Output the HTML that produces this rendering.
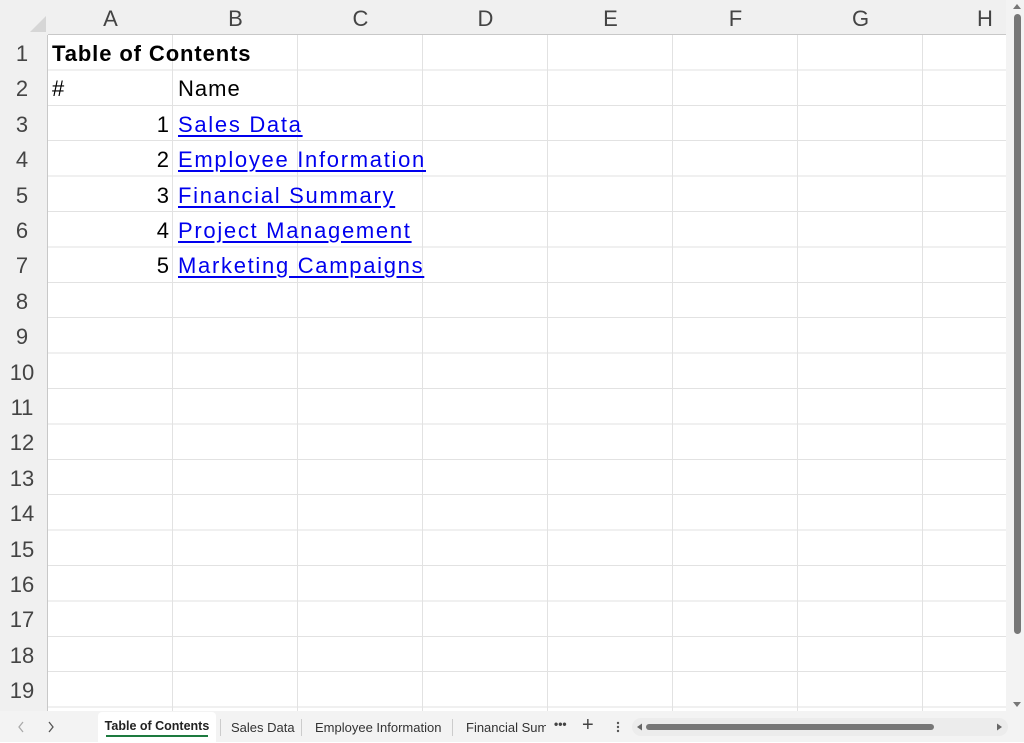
<!DOCTYPE html>
<html><head><meta charset="utf-8"><style>
*{margin:0;padding:0;box-sizing:border-box}
body{width:1024px;height:742px;overflow:hidden;background:#fff;font-family:"Liberation Sans",Carlito,sans-serif;position:relative}
.a{position:absolute}
#colh{left:0;top:0;width:1006px;height:35px;background:#f0f0f0;border-bottom:1px solid #c8c8c8}
#rowh{left:0;top:35px;width:48px;height:676px;background:#f0f0f0;border-right:1px solid #c8c8c8}
#grid{left:48px;top:35px;width:958px;height:676px;
background-image:repeating-linear-gradient(to right,transparent 0,transparent 124px,#e2e2e2 124px,#e2e2e2 125px),repeating-linear-gradient(to bottom,transparent 0,transparent 34.4px,#e2e2e2 34.4px,#e2e2e2 35.4px)}
.ch{top:0;height:35px;line-height:37px;width:125px;text-align:center;font-size:22px;color:#444}
.rh{left:0;width:44px;text-align:center;font-size:22px;color:#444;height:35.4px;line-height:37px}
.t{font-size:22px;color:#000;height:35.4px;line-height:37px;white-space:nowrap}
.lk{color:#0000ee;text-decoration:underline;text-underline-offset:3px;letter-spacing:1.7px}
#tabs{left:0;top:711px;width:1024px;height:31px;background:#f3f3f3}
.tab{top:0;height:31px;line-height:31px;font-size:13px;color:#333;white-space:nowrap}
</style></head><body>
<div class="a" id="colh"></div>
<div class="a" style="left:0;top:0;width:48px;height:35px;background:#f0f0f0"></div>
<svg class="a" style="left:30px;top:16px" width="16" height="16"><polygon points="16,0 16,16 0,16" fill="#d6d6d6"/></svg>
<div class="a ch" style="left:48px">A</div>
<div class="a ch" style="left:173px">B</div>
<div class="a ch" style="left:298px">C</div>
<div class="a ch" style="left:423px">D</div>
<div class="a ch" style="left:548px">E</div>
<div class="a ch" style="left:673px">F</div>
<div class="a ch" style="left:798px">G</div>
<div class="a ch" style="left:923px;width:125px;text-align:left;padding-left:54px">H</div>
<div class="a" id="rowh"></div>
<div class="a" id="grid"></div>
<div class="a rh" style="top:35px">1</div>
<div class="a rh" style="top:70.4px">2</div>
<div class="a rh" style="top:105.8px">3</div>
<div class="a rh" style="top:141.2px">4</div>
<div class="a rh" style="top:176.6px">5</div>
<div class="a rh" style="top:212px">6</div>
<div class="a rh" style="top:247.4px">7</div>
<div class="a rh" style="top:282.8px">8</div>
<div class="a rh" style="top:318.2px">9</div>
<div class="a rh" style="top:353.6px">10</div>
<div class="a rh" style="top:389px">11</div>
<div class="a rh" style="top:424.4px">12</div>
<div class="a rh" style="top:459.8px">13</div>
<div class="a rh" style="top:495.2px">14</div>
<div class="a rh" style="top:530.6px">15</div>
<div class="a rh" style="top:566px">16</div>
<div class="a rh" style="top:601.4px">17</div>
<div class="a rh" style="top:636.8px">18</div>
<div class="a rh" style="top:672.2px">19</div>
<div class="a t" style="left:52px;top:35px;font-weight:bold;letter-spacing:0.9px">Table of Contents</div>
<div class="a t" style="left:52px;top:70.4px">#</div>
<div class="a t" style="left:178px;top:70.4px;letter-spacing:1px">Name</div>
<div class="a t" style="left:48px;width:121px;text-align:right;top:105.8px">1</div>
<div class="a t" style="left:48px;width:121px;text-align:right;top:141.2px">2</div>
<div class="a t" style="left:48px;width:121px;text-align:right;top:176.6px">3</div>
<div class="a t" style="left:48px;width:121px;text-align:right;top:212px">4</div>
<div class="a t" style="left:48px;width:121px;text-align:right;top:247.4px">5</div>
<div class="a t lk" style="left:178px;top:105.8px">Sales Data</div>
<div class="a t lk" style="left:178px;top:141.2px">Employee Information</div>
<div class="a t lk" style="left:178px;top:176.6px">Financial Summary</div>
<div class="a t lk" style="left:178px;top:212px">Project Management</div>
<div class="a t lk" style="left:178px;top:247.4px">Marketing Campaigns</div>
<!-- vertical scrollbar -->
<div class="a" style="left:1006px;top:0;width:18px;height:711px;background:#f3f3f3"></div>
<svg class="a" style="left:1006px;top:0" width="18" height="711">
<polygon points="11,4 15,9 7,9" fill="#777"/>
<rect x="8" y="14" width="7" height="620" rx="3.5" fill="#777"/>
<polygon points="7,702 15,702 11,707" fill="#777"/>
</svg>
<!-- tabs -->
<div class="a" id="tabs"></div>
<svg class="a" style="left:0;top:711px" width="100" height="31">
<polyline points="23,11 19,16 23,21" fill="none" stroke="#aaa" stroke-width="1.3"/>
<polyline points="49,11 53,16 49,21" fill="none" stroke="#555" stroke-width="1.3"/>
</svg>
<div class="a" style="left:98px;top:712px;width:118px;height:30px;background:#fff;border-radius:4px 4px 0 0"></div>
<div class="a tab" style="left:98px;top:711px;width:118px;text-align:center;font-weight:bold;font-size:12.5px;color:#222">Table of Contents</div>
<div class="a" style="left:106px;top:735px;width:102px;height:2px;background:#1d7a3f"></div>
<div class="a" style="left:220px;top:719px;width:1px;height:17px;background:#ccc"></div>
<div class="a tab" style="left:231px;top:712px">Sales Data</div>
<div class="a" style="left:301px;top:719px;width:1px;height:17px;background:#ccc"></div>
<div class="a tab" style="left:315px;top:712px">Employee Information</div>
<div class="a" style="left:452px;top:719px;width:1px;height:17px;background:#ccc"></div>
<div class="a tab" style="left:466px;top:712px;width:80px;overflow:hidden">Financial Summary</div>
<div class="a tab" style="left:554px;top:709px;font-size:12px;font-weight:bold;color:#444">•••</div>
<div class="a tab" style="left:582px;top:710px;font-size:20px;color:#444">+</div>
<svg class="a" style="left:612px;top:711px" width="12" height="31"><circle cx="6" cy="12" r="1.2" fill="#555"/><circle cx="6" cy="16" r="1.2" fill="#555"/><circle cx="6" cy="20" r="1.2" fill="#555"/></svg>
<div class="a" style="left:632px;top:718px;width:376px;height:18px;background:#ececec;border-radius:9px"></div>
<svg class="a" style="left:632px;top:718px" width="376" height="18">
<polygon points="5,9 10,5.5 10,12.5" fill="#666"/>
<rect x="14" y="6" width="288" height="6" rx="3" fill="#777"/>
<polygon points="370,9 365,5.5 365,12.5" fill="#666"/>
</svg>
</body></html>
